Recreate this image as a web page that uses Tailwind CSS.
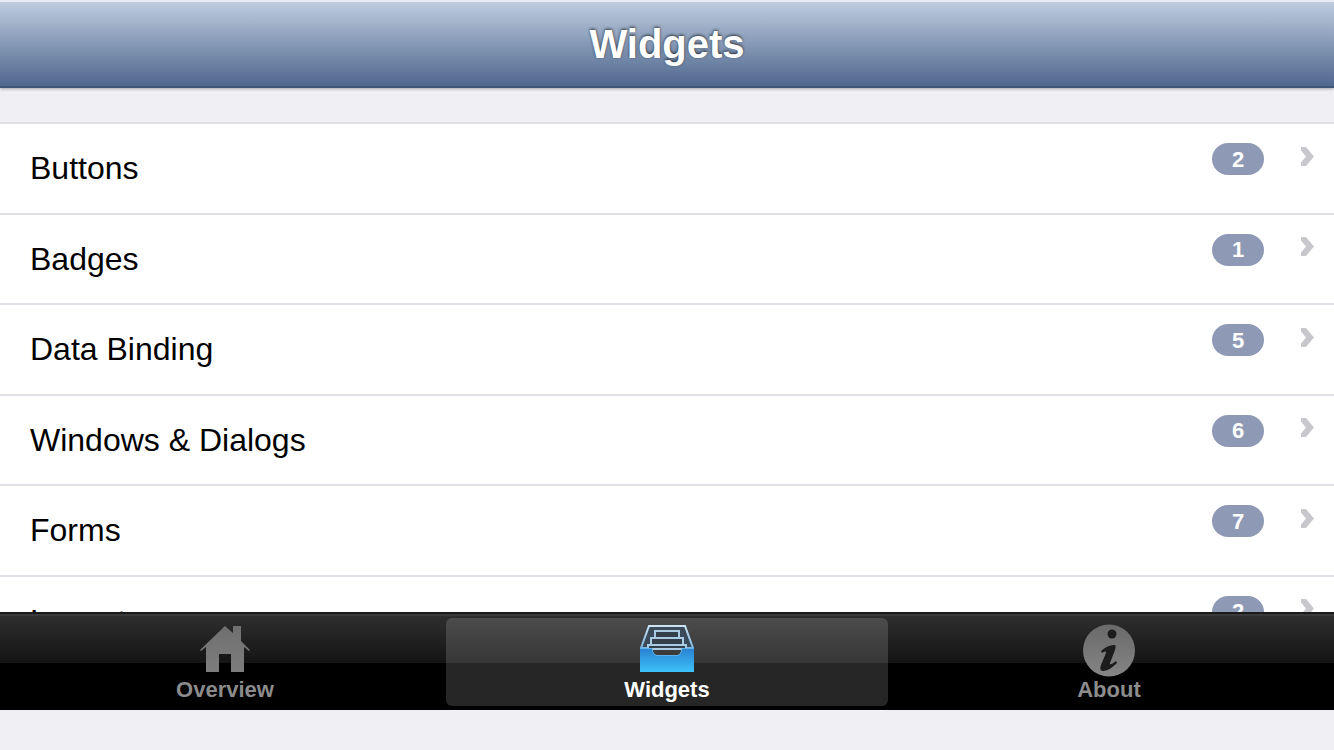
<!DOCTYPE html>
<html lang="en">
<head>
  <meta charset="UTF-8">
  <title>Widgets</title>
  <script src="https://cdn.jsdelivr.net/npm/@tailwindcss/browser@4"></script>
</head>
<body class="bg-[#efeff4] font-['Liberation_Sans',Arial,sans-serif] text-black">
  <div class="flex h-[710px] flex-col overflow-hidden">
    <!-- Header -->
    <header class="relative z-10 flex h-[88px] shrink-0 items-center justify-center border-t-2 border-b-2 border-t-[#e6ebf2] border-b-[#3f5679] bg-linear-to-b from-[#bfcddf] to-[#50688e] shadow-[0_1px_3px_rgba(0,0,0,0.3)]">
      <h1 class="text-[40px] font-bold text-white [text-shadow:0_-1px_3px_rgba(0,0,0,0.7)]">Widgets</h1>
    </header>

    <!-- List -->
    <main class="min-h-0 flex-1 overflow-hidden pt-[34px]">
      <ul class="border-t-2 border-[#e0e0e6] bg-white">
        <li class="flex h-[90.5px] items-center border-b-2 border-[#e0e0e6] pr-5 pl-[30px]">
          <span class="flex-1 text-[32px]">Buttons</span>
          <span class="mb-[18px] flex h-8 w-[52px] items-center justify-center rounded-2xl bg-[#8e9ab5] text-[22px] font-bold text-white">2</span>
          <svg class="mb-[24px] ml-[37px]" width="13" height="19" viewBox="0 0 13 19"><path d="M0 0h5l8 9.500-8 9.500H0v-3.500l5-6-5-6z" fill="#c8c8cc"/></svg>
        </li>
        <li class="flex h-[90.5px] items-center border-b-2 border-[#e0e0e6] pr-5 pl-[30px]">
          <span class="flex-1 text-[32px]">Badges</span>
          <span class="mb-[18px] flex h-8 w-[52px] items-center justify-center rounded-2xl bg-[#8e9ab5] text-[22px] font-bold text-white">1</span>
          <svg class="mb-[24px] ml-[37px]" width="13" height="19" viewBox="0 0 13 19"><path d="M0 0h5l8 9.500-8 9.500H0v-3.500l5-6-5-6z" fill="#c8c8cc"/></svg>
        </li>
        <li class="flex h-[90.5px] items-center border-b-2 border-[#e0e0e6] pr-5 pl-[30px]">
          <span class="flex-1 text-[32px]">Data Binding</span>
          <span class="mb-[18px] flex h-8 w-[52px] items-center justify-center rounded-2xl bg-[#8e9ab5] text-[22px] font-bold text-white">5</span>
          <svg class="mb-[24px] ml-[37px]" width="13" height="19" viewBox="0 0 13 19"><path d="M0 0h5l8 9.500-8 9.500H0v-3.500l5-6-5-6z" fill="#c8c8cc"/></svg>
        </li>
        <li class="flex h-[90.5px] items-center border-b-2 border-[#e0e0e6] pr-5 pl-[30px]">
          <span class="flex-1 text-[32px]">Windows &amp; Dialogs</span>
          <span class="mb-[18px] flex h-8 w-[52px] items-center justify-center rounded-2xl bg-[#8e9ab5] text-[22px] font-bold text-white">6</span>
          <svg class="mb-[24px] ml-[37px]" width="13" height="19" viewBox="0 0 13 19"><path d="M0 0h5l8 9.500-8 9.500H0v-3.500l5-6-5-6z" fill="#c8c8cc"/></svg>
        </li>
        <li class="flex h-[90.5px] items-center border-b-2 border-[#e0e0e6] pr-5 pl-[30px]">
          <span class="flex-1 text-[32px]">Forms</span>
          <span class="mb-[18px] flex h-8 w-[52px] items-center justify-center rounded-2xl bg-[#8e9ab5] text-[22px] font-bold text-white">7</span>
          <svg class="mb-[24px] ml-[37px]" width="13" height="19" viewBox="0 0 13 19"><path d="M0 0h5l8 9.500-8 9.500H0v-3.500l5-6-5-6z" fill="#c8c8cc"/></svg>
        </li>
        <li class="flex h-[90.5px] items-center border-b-2 border-[#e0e0e6] pr-5 pl-[30px]">
          <span class="flex-1 text-[32px]">Layouts</span>
          <span class="mb-[18px] flex h-8 w-[52px] items-center justify-center rounded-2xl bg-[#8e9ab5] text-[22px] font-bold text-white">2</span>
          <svg class="mb-[24px] ml-[37px]" width="13" height="19" viewBox="0 0 13 19"><path d="M0 0h5l8 9.500-8 9.500H0v-3.500l5-6-5-6z" fill="#c8c8cc"/></svg>
        </li>
      </ul>
    </main>

    <!-- Tab bar -->
    <nav class="grid h-[98px] shrink-0 grid-cols-3 border-t-2 border-[#1a1a1a] bg-[linear-gradient(#3a3a3a_0,#3a3a3a_2px,#2e2e2e_2px,#141414_49px,#000_49px)] px-1 pt-1">
      <a class="flex h-[88px] flex-col items-center text-[#8c8c8c]">
        <svg class="mt-[7px] blur-[0.5px]" width="50" height="47" viewBox="0 0 50 47">
          <defs><linearGradient id="homeFill" x1="0" y1="0" x2="0" y2="1"><stop offset="0" stop-color="#6f6f6f"/><stop offset="1" stop-color="#7d7d7d"/></linearGradient></defs>
          <path d="M25 1 33 8V1h8v15l9 9-1 1-5-4v25H31V29H19v18H6V22l-5 4-1-1z" fill="url(#homeFill)"/>
        </svg>
        <span class="mt-[5px] text-[22px] leading-[26px] font-bold">Overview</span>
      </a>
      <a class="flex h-[88px] flex-col items-center rounded-md bg-white/15 text-white">
        <svg class="mt-[7px] blur-[0.4px]" width="54" height="47" viewBox="0 0 54 47">
          <defs>
            <linearGradient id="trayFill" x1="0" y1="0" x2="0" y2="1"><stop offset="0" stop-color="#2a7fcf"/><stop offset="1" stop-color="#3dc2fa"/></linearGradient>
            <linearGradient id="frameLine" x1="0" y1="0" x2="0" y2="1"><stop offset="0" stop-color="#cbe4f5"/><stop offset="1" stop-color="#7ab4e0"/></linearGradient>
          </defs>
          <path d="M9 1h36l8 22H1z" fill="#3a4a58" stroke="url(#frameLine)" stroke-width="2"/>
          <path d="M15 6h24v7H15z" fill="#333f4a" stroke="#a9cbe3" stroke-width="2"/>
          <path d="M11 13h32v7H11z" fill="#333f4a" stroke="#a9cbe3" stroke-width="2"/>
          <path d="M8 20h38v4H8z" fill="#333f4a" stroke="#a9cbe3" stroke-width="2"/>
          <path d="M0 23h12q1 7 5 7h20q4 0 5-7h12v24H0z" fill="url(#trayFill)"/>
          <path d="M0 23.500h12q1 7 5 7h20q4 0 5-7h12" fill="none" stroke="#5fb3ea" stroke-width="1"/>
        </svg>
        <span class="mt-[5px] text-[22px] leading-[26px] font-bold">Widgets</span>
      </a>
      <a class="flex h-[88px] flex-col items-center text-[#8c8c8c]">
        <svg class="mt-[6px] blur-[0.5px]" width="54" height="53" viewBox="0 0 54 53">
          <defs><linearGradient id="infoFill" x1="0" y1="0" x2="0" y2="1"><stop offset="0" stop-color="#6a6a6a"/><stop offset="1" stop-color="#858585"/></linearGradient></defs>
          <circle cx="27" cy="26.500" r="26" fill="url(#infoFill)"/>
          <circle cx="30" cy="10" r="4.500" fill="#1c1c1c"/>
          <path d="M19 27c4-4 9-6 13-6 2 0 2 2 1 5l-5 13c-.5 2 1 2 6-2l1 2c-5 5-10 8-14 8-3 0-3-3-2-6l5-12c.5-2-1-2-4 0z" fill="#1c1c1c"/>
        </svg>
        <span class="text-[22px] leading-[26px] font-bold">About</span>
      </a>
    </nav>
  </div>
</body>
</html>
